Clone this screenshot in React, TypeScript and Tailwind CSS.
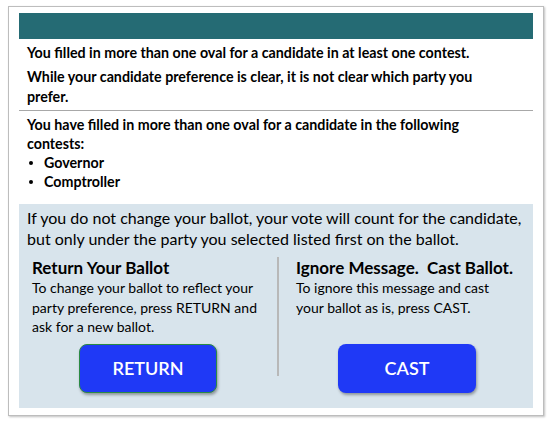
import React from "react";

export default function App() {
  return (
    <div className="w-[550px] h-[426px] bg-white pt-[6px] pl-[8px]" style={{ fontFamily: "Lato, 'Open Sans', sans-serif" }}>
      <div className="w-[536px] h-[410px] border border-[#bdbdbd] shadow-[1px_1px_2px_rgba(0,0,0,0.25)] px-[10px] pt-[6px] flex flex-col">
        <div className="h-[26px] bg-[#256b74]" />
        <div className="px-[8px] pt-[3px] pb-[3px] text-[14.25px] font-bold text-black leading-[20px]">
          <p className="mt-[1px]">You filled in more than one oval for a candidate in at least one contest.</p>
          <p className="mt-[4px]">While your candidate preference is clear, it is not clear which party you<br />prefer.</p>
        </div>
        <div className="border-t border-[#a8a8a8] px-[8px] pt-[4px] text-[14.25px] font-bold text-black leading-[19px]">
          <p>You have filled in more than one oval for a candidate in the following<br />contests:</p>
          <ul>
            <li className="flex items-center"><span className="w-[4px] h-[4px] rounded-full bg-black ml-[2px] mr-[11px]" />Governor</li>
            <li className="flex items-center"><span className="w-[4px] h-[4px] rounded-full bg-black ml-[2px] mr-[11px]" />Comptroller</li>
          </ul>
        </div>
        <div className="mt-[13px] bg-[#d8e4ec] flex-1 mb-[7px] pt-[3px] pl-[8px] text-black">
          <p className="leading-[21px] text-[16px]">If you do not change your ballot, your vote will count for the candidate,<br />but only under the party you selected listed first on the ballot.</p>
          <div className="flex mt-[8px]">
            <div className="w-[250px] pl-[5px] pr-[6px] flex flex-col">
              <h2 className="font-bold text-[17px] leading-[21px]">Return Your Ballot</h2>
              <p className="leading-[19.5px] text-[14px]">To change your ballot to reflect your party preference, press RETURN and ask for a new ballot.</p>
              <div className="flex pl-[47px] mt-[7px]">
                <button className="w-[138px] h-[49px] rounded-[8px] bg-[#1f39f6] border border-[#2a8a44] text-white text-[18px] font-semibold shadow-[1px_2px_3px_rgba(0,0,0,0.35)]">RETURN</button>
              </div>
            </div>
            <div className="w-[2px] h-[119px] bg-[#b8b8b8]" />
            <div className="pl-[17px] flex flex-col">
              <h2 className="font-bold text-[17px] leading-[21px]">Ignore Message.&nbsp; Cast Ballot.</h2>
              <p className="leading-[19.5px] text-[14px]">To ignore this message and cast<br />your ballot as is, press CAST.</p>
              <div className="flex pl-[42px] mt-[27px]">
                <button className="w-[138px] h-[49px] rounded-[8px] bg-[#1f39f6] text-white text-[18px] font-semibold shadow-[1px_2px_3px_rgba(0,0,0,0.35)]">CAST</button>
              </div>
            </div>
          </div>
        </div>
      </div>
    </div>
  );
}
